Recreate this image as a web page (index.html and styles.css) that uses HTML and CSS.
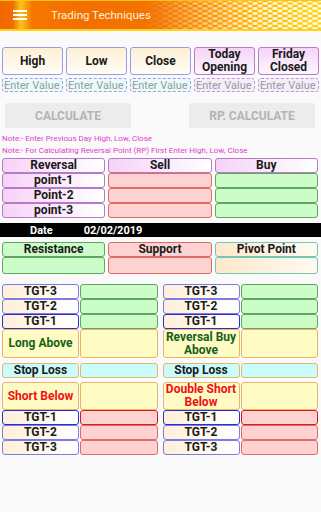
FILE: index.html
```html
<!DOCTYPE html>
<html lang="en">
<head>
    <meta charset="UTF-8">
    <meta name="viewport" content="width=device-width, initial-scale=1.0">
    <title>Trading Techniques</title>
    <link rel="stylesheet" href="styles.css">
</head>
<body>
    <header class="app-bar">
        <svg class="menu-icon" width="14" height="10" viewBox="0 0 14 10">
            <rect x="0" y="0" width="14" height="2" fill="#fff"/>
            <rect x="0" y="4" width="14" height="2" fill="#fff"/>
            <rect x="0" y="8" width="14" height="2" fill="#fff"/>
        </svg>
        <span class="app-title">Trading Techniques</span>
    </header>

    <div class="price-labels">
        <div class="price-label cream">High</div>
        <div class="price-label cream">Low</div>
        <div class="price-label cream">Close</div>
        <div class="price-label pink">Today Opening</div>
        <div class="price-label pink">Friday Closed</div>
    </div>
    <div class="price-inputs">
        <input class="price-input cyan" type="text" placeholder="Enter Value">
        <input class="price-input cyan" type="text" placeholder="Enter Value">
        <input class="price-input cyan" type="text" placeholder="Enter Value">
        <input class="price-input lilac" type="text" placeholder="Enter Value">
        <input class="price-input lilac" type="text" placeholder="Enter Value">
    </div>

    <div class="calc-row">
        <button class="calc-btn" disabled>Calculate</button>
        <button class="calc-btn" disabled>RP. Calculate</button>
    </div>

    <div class="notes">
        <p>Note:- Enter Previous Day High, Low, Close</p>
        <p>Note:- For Calculating Reversal Point (RP) First Enter High, Low, Close</p>
    </div>

    <div class="reversal-table">
        <div class="cell pink">Reversal</div>
        <div class="cell pink">Sell</div>
        <div class="cell pink">Buy</div>
        <div class="cell pink">point-1</div>
        <div class="cell red"></div>
        <div class="cell green"></div>
        <div class="cell pink">Point-2</div>
        <div class="cell red"></div>
        <div class="cell green"></div>
        <div class="cell pink">point-3</div>
        <div class="cell red"></div>
        <div class="cell green"></div>
    </div>

    <div class="date-bar">
        <span class="date-label">Date</span>
        <span class="date-value">02/02/2019</span>
    </div>

    <div class="pivot-table">
        <div class="cell green">Resistance</div>
        <div class="cell red">Support</div>
        <div class="cell peach">Pivot Point</div>
        <div class="cell green tall"></div>
        <div class="cell red tall"></div>
        <div class="cell peach tall"></div>
    </div>

    <div class="targets">
        <div class="target-side">
            <div class="cell tgt">TGT-3</div><div class="cell green"></div>
            <div class="cell tgt">TGT-2</div><div class="cell green"></div>
            <div class="cell tgt dark">TGT-1</div><div class="cell green"></div>
            <div class="cell yellow big long">Long Above</div><div class="cell yellow big"></div>
            <div class="cell cyan-cell stop">Stop Loss</div><div class="cell cyan-cell stop"></div>
            <div class="cell yellow big short">Short Below</div><div class="cell yellow big short-gap"></div>
            <div class="cell tgt dark">TGT-1</div><div class="cell red dark-red"></div>
            <div class="cell tgt">TGT-2</div><div class="cell red"></div>
            <div class="cell tgt">TGT-3</div><div class="cell red"></div>
        </div>
        <div class="target-side">
            <div class="cell tgt">TGT-3</div><div class="cell green"></div>
            <div class="cell tgt">TGT-2</div><div class="cell green"></div>
            <div class="cell tgt dark">TGT-1</div><div class="cell green"></div>
            <div class="cell yellow big long">Reversal Buy Above</div><div class="cell yellow big"></div>
            <div class="cell cyan-cell stop">Stop Loss</div><div class="cell cyan-cell stop"></div>
            <div class="cell yellow big short">Double Short Below</div><div class="cell yellow big short-gap"></div>
            <div class="cell tgt dark">TGT-1</div><div class="cell red dark-red"></div>
            <div class="cell tgt">TGT-2</div><div class="cell red"></div>
            <div class="cell tgt">TGT-3</div><div class="cell red"></div>
        </div>
    </div>
</body>
</html>
```

FILE: styles.css
```css
* {
    box-sizing: border-box;
}
body {
    margin: 0;
    background: #fafafa;
    font-family: Roboto, "Liberation Sans", sans-serif;
    color: #1a1a1a;
}
.app-bar {
    position: relative;
    height: 31px;
    display: flex;
    align-items: center;
    border-top: 1px solid #ffc21a;
    border-bottom: 2px solid #ffd21a;
    background: linear-gradient(90deg, #f06800 0%, #f26e00 4%, #ffc21a 6.5%, #f57800 10%, #f46e00 25%, #f47400 50%, #fb9200 66%, #ffb300 80%, #ffd000 100%);
    overflow: hidden;
}
/* honeycomb highlight on the right half */
.app-bar::after {
    content: "";
    position: absolute;
    inset: 0;
    background:
        radial-gradient(ellipse 3.5px 2px, #fffbe0 55%, transparent 100%) 0 0 / 10px 5px,
        radial-gradient(ellipse 3.5px 2px, #fffbe0 55%, transparent 100%) 5px 2.5px / 10px 5px;
    -webkit-mask-image: linear-gradient(90deg, transparent 45%, rgba(0, 0, 0, 0.5) 62%, #000 85%);
    mask-image: linear-gradient(90deg, transparent 45%, rgba(0, 0, 0, 0.5) 62%, #000 85%);
}
.menu-icon {
    position: relative;
    z-index: 1;
    margin-left: 13px;
}
.app-title {
    position: relative;
    z-index: 1;
    margin-left: 24px;
    color: #fff0dc;
    font-size: 11.5px;
}

.price-labels,
.price-inputs {
    display: grid;
    grid-template-columns: repeat(5, 1fr);
    column-gap: 3px;
    padding: 0 2px;
}
.price-labels {
    margin-top: 16px;
}
.price-label {
    height: 28px;
    display: flex;
    align-items: center;
    justify-content: center;
    text-align: center;
    font-size: 12px;
    font-weight: bold;
    line-height: 13px;
    border-radius: 3px;
}
.price-label.cream {
    border: 1px solid #9c9cec;
    background: linear-gradient(180deg, #fdf0d6, #fffdf6);
}
.price-label.pink {
    border: 1px solid #b77ccc;
    background: linear-gradient(180deg, #f6d4f8, #fdf6fe);
}
.price-inputs {
    margin-top: 3px;
}
.price-input {
    width: 100%;
    height: 14px;
    padding: 0 0 0 1px;
    font-family: inherit;
    font-size: 11px;
    border-radius: 3px;
}
.price-input::placeholder {
    color: #9a9a9a;
}
.price-input.cyan {
    border: 1px dashed #9c9cec;
    background: #e8fcfa;
}
.price-input.lilac {
    border: 1px dashed #b99ad6;
    background: #f6ecfc;
}

.calc-row {
    display: flex;
    justify-content: space-between;
    padding: 0 6px 0 5px;
    margin-top: 11px;
}
.calc-btn {
    width: 126px;
    height: 25px;
    border: none;
    border-radius: 2px;
    background: #ececec;
    color: #b4b4b4;
    font-family: inherit;
    font-size: 12px;
    font-weight: bold;
    text-transform: uppercase;
}

.notes {
    margin-top: 5px;
    padding: 0 2px;
}
.notes p {
    margin: 0;
    color: #e23ccc;
    font-size: 8px;
    line-height: 12px;
}

.cell {
    display: flex;
    align-items: center;
    justify-content: center;
    height: 15px;
    font-size: 12px;
    font-weight: bold;
    border-radius: 3px;
    text-align: center;
    line-height: 13px;
}
.cell.pink {
    border: 1px solid #b57ac8;
    background: linear-gradient(90deg, #f6d2f8, #fff);
}
.cell.red {
    border: 1px solid #de6a6a;
    background: #ffd2d2;
}
.cell.green {
    border: 1px solid #5ea85e;
    background: #ccfcc8;
}
.cell.peach {
    border: 1px solid #76c6b4;
    background: linear-gradient(90deg, #fde8cc, #fffaf2);
}
.cell.tall {
    height: 17px;
}

.reversal-table,
.pivot-table {
    display: grid;
    grid-template-columns: repeat(3, 1fr);
    column-gap: 3px;
    padding: 0 3px 0 2px;
}
.reversal-table {
    margin-top: 1px;
}

.date-bar {
    margin-top: 5px;
    height: 14px;
    background: #000;
    color: #fff;
    font-size: 11px;
    font-weight: bold;
    display: flex;
    align-items: center;
}
.date-label {
    margin-left: 30px;
}
.date-value {
    margin-left: 31px;
}

.pivot-table {
    margin-top: 5px;
}

.targets {
    display: flex;
    gap: 5px;
    margin-top: 10px;
    padding: 0 3px 0 2px;
}
.target-side {
    flex: 1;
    display: grid;
    grid-template-columns: 77px 1fr;
    column-gap: 1px;
}
.cell.tgt {
    border: 1px solid #7c7ce6;
    background: linear-gradient(90deg, #fdf0d8, #fff);
}
.cell.tgt.dark {
    border-color: #2b2bd8;
}
.cell.dark-red {
    border-color: #d81c1c;
}
.cell.yellow {
    border: 1px solid #e9b46a;
    background: #fffbc4;
}
.cell.big {
    height: 29px;
}
.cell.long {
    color: #16601a;
}
.cell.short {
    color: #f01010;
}
.cell.cyan-cell {
    border: 1px solid #e9b46a;
    background: #cafcfc;
}
.cell.stop {
    margin-top: 5px;
}
.cell.short,
.cell.short-gap {
    margin-top: 4px;
    height: 28px;
}
```
